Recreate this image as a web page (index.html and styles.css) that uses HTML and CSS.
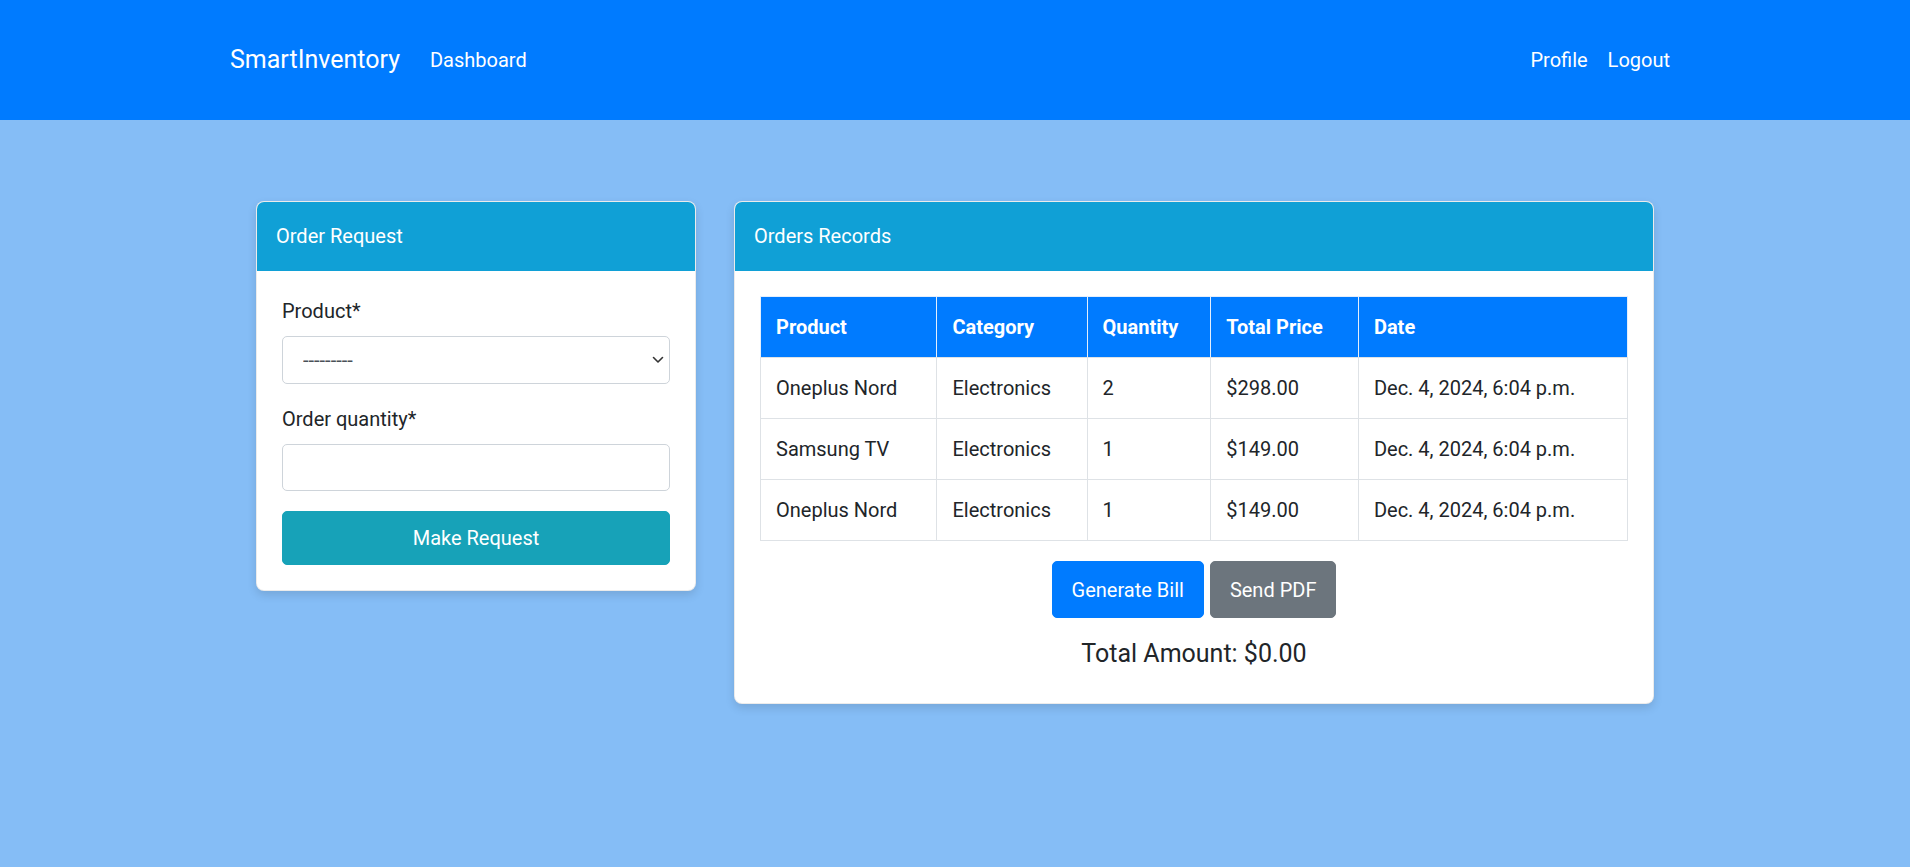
FILE: index.html
```html
<!DOCTYPE html>
<html lang="en">
<head>
<meta charset="utf-8">
<title>SmartInventory</title>
<link rel="stylesheet" href="styles.css">
</head>
<body>
<nav class="navbar">
  <div class="nav-inner">
    <div class="nav-left">
      <a class="brand" href="#">SmartInventory</a>
      <a class="nav-link" href="#">Dashboard</a>
    </div>
    <div class="nav-right">
      <a class="nav-link" href="#">Profile</a>
      <a class="nav-link" href="#">Logout</a>
    </div>
  </div>
</nav>

<main class="main">
  <section class="card card-left">
    <div class="card-header">Order Request</div>
    <div class="card-body">
      <div class="form-group">
        <label class="label" for="product">Product*</label>
        <div class="select-wrap">
          <select id="product" class="control select">
            <option>---------</option>
          </select>
          <svg class="chevron" width="12" height="8" viewBox="0 0 12 8"><path d="M1.5 1.5 L6 6 L10.5 1.5" fill="none" stroke="#333" stroke-width="1.6" stroke-linecap="round" stroke-linejoin="round"/></svg>
        </div>
      </div>
      <div class="form-group">
        <label class="label" for="qty">Order quantity*</label>
        <input id="qty" class="control" type="text">
      </div>
      <button class="btn btn-info btn-block">Make Request</button>
    </div>
  </section>

  <section class="card card-right">
    <div class="card-header">Orders Records</div>
    <div class="card-body">
      <table class="table">
        <thead>
          <tr><th>Product</th><th>Category</th><th>Quantity</th><th>Total Price</th><th>Date</th></tr>
        </thead>
        <tbody>
          <tr><td>Oneplus Nord</td><td>Electronics</td><td>2</td><td>$298.00</td><td>Dec. 4, 2024, 6:04 p.m.</td></tr>
          <tr><td>Samsung TV</td><td>Electronics</td><td>1</td><td>$149.00</td><td>Dec. 4, 2024, 6:04 p.m.</td></tr>
          <tr><td>Oneplus Nord</td><td>Electronics</td><td>1</td><td>$149.00</td><td>Dec. 4, 2024, 6:04 p.m.</td></tr>
        </tbody>
      </table>
      <div class="actions">
        <button class="btn btn-primary">Generate Bill</button>
        <button class="btn btn-secondary">Send PDF</button>
      </div>
      <h4 class="total">Total Amount: $0.00</h4>
    </div>
  </section>
</main>
</body>
</html>
```

FILE: styles.css
```css
* { box-sizing: border-box; }

html, body {
  margin: 0;
  padding: 0;
}

body {
  background: #85bdf6;
  font-family: Roboto, "Liberation Sans", Arial, sans-serif;
  font-size: 20px;
  line-height: 1.5;
  color: #212529;
  min-height: 867px;
}

.navbar {
  background: #007bff;
  height: 120px;
  display: flex;
  align-items: center;
}

.nav-inner {
  width: 1450px;
  margin: 0 auto;
  display: flex;
  justify-content: space-between;
  align-items: center;
}

.nav-left, .nav-right {
  display: flex;
  align-items: center;
}

.brand {
  color: #fff;
  text-decoration: none;
  font-size: 25px;
  line-height: 1.5;
  margin-right: 20px;
}

.nav-link {
  color: #fff;
  text-decoration: none;
  font-size: 20px;
  padding: 10px 10px;
}

.main {
  display: flex;
  justify-content: center;
  align-items: flex-start;
  gap: 38px;
  padding-top: 81px;
}

.card {
  background: #fff;
  border: 1px solid rgba(0, 0, 0, 0.08);
  border-radius: 8px;
  box-shadow: 0 4px 10px rgba(0, 0, 0, 0.12);
  overflow: hidden;
}

.card-left { width: 440px; }
.card-right { width: 920px; }

.card-header {
  background: #10a0d6;
  color: #fff;
  font-size: 20px;
  line-height: 30px;
  padding: 19px 19px 20px;
}

.card-body {
  padding: 25px;
}

.form-group {
  margin-bottom: 20px;
}

.label {
  display: block;
  margin-bottom: 10px;
  line-height: 30px;
  color: #212529;
}

.control {
  display: block;
  width: 100%;
  height: 47.5px;
  border: 1px solid #ced4da;
  border-radius: 5px;
  background: #fff;
  font-family: inherit;
  font-size: 20px;
  color: #495057;
  padding: 0 19px;
}

.select-wrap {
  position: relative;
}

.select {
  appearance: none;
  -webkit-appearance: none;
  padding-left: 20px;
}

.chevron {
  position: absolute;
  right: 6px;
  top: 20px;
  pointer-events: none;
}

.btn {
  display: inline-block;
  font-family: inherit;
  font-size: 20px;
  line-height: 30px;
  border: 1px solid transparent;
  border-radius: 5px;
  color: #fff;
  padding: 12.5px 19px;
  cursor: pointer;
}

.btn-block {
  display: block;
  width: 100%;
  padding: 11px 19px;
}

.btn-info { background: #17a2b8; border-color: #17a2b8; }
.btn-primary { background: #007bff; border-color: #007bff; }
.btn-secondary { background: #6c757d; border-color: #6c757d; }

.table {
  width: 100%;
  border-collapse: collapse;
  margin-bottom: 20px;
}

.table th, .table td {
  text-align: left;
  padding: 15px;
  line-height: 30px;
  border: 1px solid #dee2e6;
  white-space: nowrap;
}

.table th {
  background: #007bff;
  color: #fff;
  font-weight: 700;
  border-color: #e4eefc;
  border-bottom-color: #dee2e6;
}

.table td {
  color: #212529;
}

.actions {
  display: flex;
  justify-content: center;
  gap: 6px;
}

.total {
  margin: 21px 0 9px;
  text-align: center;
  font-size: 25px;
  font-weight: 400;
  line-height: 1.2;
  color: #212529;
}
```
